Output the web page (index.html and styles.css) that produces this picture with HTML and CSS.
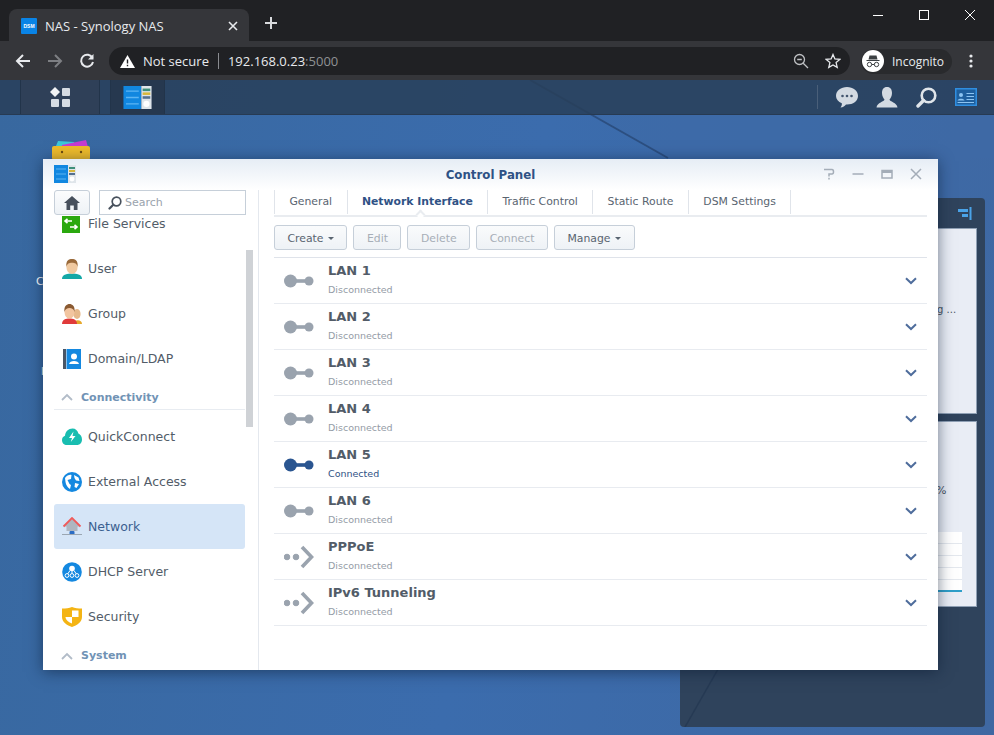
FILE: index.html
```html
<!DOCTYPE html>
<html lang="en">
<head>
    <meta charset="UTF-8">
    <title>NAS - Synology NAS</title>
    <link rel="stylesheet" href="styles.css">
</head>
<body>
    <svg class="defs" width="0" height="0">
        <symbol id="port" viewBox="0 0 30 14">
            <circle cx="6.5" cy="7" r="6.5"/>
            <rect x="11" y="5.2" width="10" height="3.6"/>
            <circle cx="25" cy="7" r="4.5"/>
        </symbol>
        <symbol id="tunnel" viewBox="0 0 30 24">
            <circle cx="3" cy="12" r="2.8"/>
            <circle cx="12" cy="12" r="2.8"/>
            <path d="M18 2 L27.5 12 L18 22" fill="none" stroke-width="3.6"/>
        </symbol>
        <symbol id="chevron" viewBox="0 0 12 8">
            <path d="M1 1.2 L6 6 L11 1.2" fill="none" stroke-width="2"/>
        </symbol>
        <symbol id="collapse" viewBox="0 0 12 8">
            <path d="M1 7 L6 2 L11 7" fill="none" stroke-width="1.8"/>
        </symbol>
        <symbol id="cp-icon" viewBox="0 0 22 18">
            <rect width="14" height="18" fill="#1187e0"/>
            <path d="M2 4h10M2 9h10M2 14h10" stroke="#5db5f2" stroke-width="1"/>
            <rect x="14" width="8" height="18" fill="#dfe5ea"/>
            <rect x="15" y="2" width="6" height="2" fill="#3e8f7a"/>
            <rect x="15" y="5" width="6" height="2" fill="#d7b73c"/>
            <rect x="15" y="8" width="6" height="2" fill="#55708f"/>
            <circle cx="18" cy="14" r="2.4" fill="#fff"/>
        </symbol>
    </svg>

    <div class="tabstrip">
        <div class="tab">
            <span class="favicon">DSM</span>
            <span class="tab-title">NAS - Synology NAS</span>
            <svg class="tab-close" width="10" height="10" viewBox="0 0 10 10"><path d="M1 1 L9 9 M9 1 L1 9"/></svg>
        </div>
        <svg class="new-tab" width="14" height="14" viewBox="0 0 14 14"><path d="M7 1 V13 M1 7 H13"/></svg>
        <div class="win-controls">
            <svg width="12" height="12" viewBox="0 0 12 12"><path d="M1 6.5 H11"/></svg>
            <svg width="12" height="12" viewBox="0 0 12 12"><rect x="1.5" y="1.5" width="9" height="9"/></svg>
            <svg width="12" height="12" viewBox="0 0 12 12"><path d="M1 1 L11 11 M11 1 L1 11"/></svg>
        </div>
    </div>

    <div class="toolbar">
        <svg class="nav-icon" width="16" height="16" viewBox="0 0 16 16"><path d="M15 8 H2 M8 2 L2 8 L8 14"/></svg>
        <svg class="nav-icon dim" width="16" height="16" viewBox="0 0 16 16"><path d="M1 8 H14 M8 2 L14 8 L8 14"/></svg>
        <svg class="nav-icon" width="16" height="16" viewBox="0 0 16 16"><path d="M13.5 5 A6 6 0 1 0 14 9"/><path class="solid" d="M14.5 1 V6.5 H9 Z"/></svg>
        <div class="omnibox">
            <svg class="warn" width="15" height="13" viewBox="0 0 15 13"><path d="M7.5 0 L15 13 H0 Z" fill="#fff"/><path d="M7.5 4.5 V8.5 M7.5 9.8 V11.2" stroke="#202124" stroke-width="1.4"/></svg>
            <span class="not-secure">Not secure</span>
            <span class="url">192.168.0.23<span class="port">:5000</span></span>
            <div class="omni-right">
                <svg class="omni-icon" width="16" height="16" viewBox="0 0 16 16"><circle cx="6.5" cy="6.5" r="5"/><path d="M10.2 10.2 L15 15 M4.2 6.5 H8.8"/></svg>
                <svg class="omni-icon star" width="16" height="16" viewBox="0 0 16 16"><path d="M8 1.5 L9.9 6 L14.8 6.4 L11.1 9.6 L12.2 14.4 L8 11.9 L3.8 14.4 L4.9 9.6 L1.2 6.4 L6.1 6 Z"/></svg>
            </div>
        </div>
        <div class="profile">
            <svg width="22" height="22" viewBox="0 0 22 22">
                <circle cx="11" cy="11" r="11" fill="#fff"/>
                <path d="M7.5 5.5 H14.5 L15.5 9.5 H6.5 Z M4.5 10 H17.5 V11 H4.5 Z" fill="#3c4043"/>
                <circle cx="7.5" cy="14.5" r="2.2" fill="none" stroke="#3c4043"/>
                <circle cx="14.5" cy="14.5" r="2.2" fill="none" stroke="#3c4043"/>
                <path d="M9.7 14.5 H12.3" stroke="#3c4043"/>
            </svg>
            <span>Incognito</span>
        </div>
        <svg class="kebab" width="4" height="14" viewBox="0 0 4 14"><circle cx="2" cy="2" r="1.6"/><circle cx="2" cy="7" r="1.6"/><circle cx="2" cy="12" r="1.6"/></svg>
    </div>

    <div class="desktop">
        <svg class="wallpaper" width="994" height="655" viewBox="0 0 994 655">
            <path d="M668 78 L994 78 L994 0 L530 0 Z" fill="#3d6aa6" opacity="0.5"/>
            <path d="M530 0 L668 78" stroke="#2c4f80" stroke-width="2" fill="none"/>
        </svg>

        <div class="taskbar">
            <div class="task-btn apps">
                <svg width="22" height="22" viewBox="0 0 22 22">
                    <path d="M6 1 L11 6 L6 11 L1 6 Z" fill="#f1f3f5"/>
                    <rect x="13" y="2" width="8" height="8" rx="1" fill="#d5dbe2"/>
                    <rect x="2" y="13" width="8" height="8" rx="1" fill="#d5dbe2"/>
                    <rect x="13" y="13" width="8" height="8" rx="1" fill="#d5dbe2"/>
                </svg>
            </div>
            <div class="task-btn open">
                <svg width="29" height="23"><use href="#cp-icon"/></svg>
            </div>
            <div class="tray">
                <svg width="22" height="21" viewBox="0 0 22 21"><path d="M11 0 C17 0 22 3.6 22 9 C22 14 17 17.5 11 17.5 L10 17.5 C9 19 7 20.5 4.5 20.5 C5.8 19 6 17.5 5.8 16.3 C2.3 14.8 0 12.2 0 9 C0 3.6 5 0 11 0 Z" fill="#d3dae2"/><circle cx="6.5" cy="9" r="1.3" fill="#43566f"/><circle cx="11" cy="9" r="1.3" fill="#43566f"/><circle cx="15.5" cy="9" r="1.3" fill="#43566f"/></svg>
                <svg width="22" height="21" viewBox="0 0 22 21"><path d="M11 0 C14.5 0 16 2.6 16 6 C16 9 14.5 11.5 13.5 12.5 C13.5 14.5 21 15.5 21.5 20.5 H0.5 C1 15.5 8.5 14.5 8.5 12.5 C7.5 11.5 6 9 6 6 C6 2.6 7.5 0 11 0 Z" fill="#d3dae2"/></svg>
                <svg width="21" height="21" viewBox="0 0 21 21"><circle cx="12.5" cy="8.5" r="6.8" fill="none" stroke="#e0e5ea" stroke-width="2.6"/><path d="M7.5 13.5 L2 19" stroke="#e0e5ea" stroke-width="3.4" stroke-linecap="round"/></svg>
                <svg width="22" height="18" viewBox="0 0 22 18"><rect width="22" height="18" fill="#2f8ee0"/><rect x="1.5" y="1.5" width="19" height="15" fill="#1e5f9e"/><circle cx="6" cy="7" r="2" fill="#8cc4f2"/><path d="M2.5 12.5 C3 10 9 10 9.5 12.5 Z" fill="#8cc4f2"/><path d="M11.5 5.5 H19 M11.5 8.5 H19 M11.5 11.5 H19 M2.5 14.5 H19" stroke="#8cc4f2" stroke-width="1.2"/></svg>
            </div>
        </div>

        <div class="desk-icon">
            <svg width="38" height="20" viewBox="0 0 38 20">
                <path d="M4 6 L6 1 L22 2 L24 6 Z" fill="#3cc7d8"/>
                <path d="M10 5 L34 0 L36 7 H10 Z" fill="#c43cd0"/>
                <rect y="6" width="38" height="14" rx="2" fill="#eebb2a"/>
                <circle cx="10" cy="12" r="1.2" fill="#6d4c10"/>
                <circle cx="29" cy="12" r="1.2" fill="#6d4c10"/>
            </svg>
        </div>
        <span class="desk-label first">C</span>
        <span class="desk-label second">l</span>

        <div class="widget">
            <svg class="widget-line" width="50" height="70" viewBox="0 0 50 70"><path d="M45 0 L5 70" stroke="#263a54" stroke-width="1.5" fill="none"/></svg>
            <div class="widget-head">
                <svg width="15" height="13" viewBox="0 0 15 13"><path d="M1 2 H11 V5 H1 Z M5 7 H11 V10 H5 Z" fill="#4aa3e8"/><rect x="12.5" width="2" height="13" fill="#4aa3e8"/></svg>
            </div>
            <div class="widget-card top"><span class="widget-text">g ...</span></div>
            <div class="widget-card bottom">
                <span class="widget-text pct">%</span>
                <div class="chart"></div>
            </div>
        </div>

        <div class="window">
            <div class="win-title">
                <svg class="win-icon" width="22" height="18"><use href="#cp-icon"/></svg>
                <span class="win-name">Control Panel</span>
                <div class="win-actions">
                    <svg width="12" height="12" viewBox="0 0 12 12"><path d="M1 1.5 H9 C11 1.5 11 6 9 6 H6 V8.5 M6 9.8 V11.5"/></svg>
                    <svg width="12" height="12" viewBox="0 0 12 12"><path d="M0.5 6 H11.5"/></svg>
                    <svg width="12" height="12" viewBox="0 0 12 12"><rect x="1" y="2.5" width="10" height="7.5"/><path class="thick" d="M1 3.5 H11"/></svg>
                    <svg width="12" height="12" viewBox="0 0 12 12"><path d="M1 1 L11 11 M11 1 L1 11"/></svg>
                </div>
            </div>

            <div class="win-body">
                <aside class="sidebar">
                    <div class="side-top">
                        <button class="home-btn">
                            <svg width="16" height="14" viewBox="0 0 16 14"><path d="M8 0 L16 7 H13.5 V14 H9.8 V9.5 H6.2 V14 H2.5 V7 H0 Z" fill="#47505c"/></svg>
                        </button>
                        <div class="search">
                            <svg width="14" height="14" viewBox="0 0 14 14"><circle cx="8.5" cy="5.5" r="4.3" fill="none" stroke="#47505c" stroke-width="1.7"/><path d="M5.3 8.7 L1.5 12.5" stroke="#47505c" stroke-width="2.2" stroke-linecap="round"/></svg>
                            <span>Search</span>
                        </div>
                    </div>
                    <div class="side-list">
                        <div class="side-item first-item">
                            <svg width="20" height="20" viewBox="0 0 20 20"><rect y="2" width="18" height="17" fill="#2aa80e"/><path d="M3 7 H10 M5.5 4.8 L3 7 L5.5 9.2 M8 13 H15 M12.5 10.8 L15 13 L12.5 15.2" fill="none" stroke="#fff" stroke-width="1.6"/></svg>
                            <span>File Services</span>
                        </div>
                        <div class="side-item">
                            <svg width="20" height="20" viewBox="0 0 20 20"><path d="M0 20 C0 15 6 14.5 10 14.5 C14 14.5 20 15 20 20 Z" fill="#14a8a6"/><ellipse cx="10" cy="8" rx="5.6" ry="7" fill="#f0c9a0"/><path d="M4.4 8 C3.6 1.5 7 0 10 0 C13 0 16.4 1.5 15.6 8 C14.8 4.6 13 3.8 10 3.8 C7 3.8 5.2 4.6 4.4 8 Z" fill="#9a6a3a"/></svg>
                            <span>User</span>
                        </div>
                        <div class="side-item">
                            <svg width="20" height="20" viewBox="0 0 20 20"><ellipse cx="15" cy="10" rx="3.6" ry="5" fill="#e6b98c"/><path d="M11 20 C12 15 20 15 20 20 Z" fill="#e6a82a"/><path d="M0 20 C0 15.5 4 14.5 7.5 14.5 C11 14.5 15 15.5 15 20 Z" fill="#e03a3a"/><ellipse cx="7.5" cy="8" rx="5" ry="6.6" fill="#f2c5a0"/><path d="M2.5 8 C1.6 2 5 0 7.5 0 C10 0 13.4 2 12.5 8 C11.8 5 10 4 7.5 4 C5 4 3.2 5 2.5 8 Z" fill="#8a5a32"/></svg>
                            <span>Group</span>
                        </div>
                        <div class="side-item">
                            <svg width="20" height="20" viewBox="0 0 20 20"><rect x="1" y="0" width="3" height="20" fill="#4a5666"/><rect x="4.5" y="0" width="14.5" height="20" fill="#1488e0"/><circle cx="12" cy="7.5" r="3" fill="#fff"/><path d="M7 15 C7.5 11 16.5 11 17 15 Z" fill="#fff"/></svg>
                            <span>Domain/LDAP</span>
                        </div>
                        <div class="side-group conn">
                            <svg width="12" height="8"><use href="#collapse"/></svg>
                            <span>Connectivity</span>
                        </div>
                        <div class="side-item">
                            <svg width="20" height="18" viewBox="0 0 20 18"><path d="M5 17 C2 17 0 15 0 12 C0 10 1.2 8.5 3 7.8 C3.4 3.5 6.5 0.5 10.5 0.5 C13.5 0.5 15.8 2.5 16.4 5.6 C18.6 6.4 20 8.8 20 11.5 C20 14.8 17.8 17 15 17 Z" fill="#18bdb0"/><path d="M11.5 3.5 L7 10 H10 L8.8 14 L13.5 8 H10.5 Z" fill="#fff"/></svg>
                            <span>QuickConnect</span>
                        </div>
                        <div class="side-item">
                            <svg width="20" height="20" viewBox="0 0 20 20"><circle cx="10" cy="10" r="10" fill="#1488e0"/><path d="M3 6 C5 3 8 2.5 9.5 3 L9 7 L5.5 8 L7.5 12 L9 13 L8 17 C5.5 15.5 4 13 3.5 10 Z M12 3 L16.5 5.5 L17.5 9 L14 8.5 L12.5 6 Z M13 11 L17 12 L14.5 16 L12.5 15 Z" fill="#fff"/></svg>
                            <span>External Access</span>
                        </div>
                        <div class="side-item active">
                            <svg width="20" height="20" viewBox="0 0 20 20"><path d="M10 2 L18 9.5 H15.5 V14 H4.5 V9.5 H2 Z" fill="#aeb6c0"/><path d="M1.5 9.5 L10 1 L18.5 9.5" fill="none" stroke="#ef5a5a" stroke-width="1.8"/><rect x="7.5" y="14" width="5" height="4" rx="1" fill="#2a6cc4"/><path d="M0 17.5 H20" stroke="#9aa6b2"/></svg>
                            <span>Network</span>
                        </div>
                        <div class="side-item">
                            <svg width="20" height="20" viewBox="0 0 20 20"><circle cx="10" cy="10" r="9.8" fill="#1488e0"/><circle cx="10" cy="6.5" r="2.8" fill="#fff"/><g fill="none" stroke="#fff"><circle cx="5" cy="13.5" r="1.9"/><circle cx="10" cy="13.5" r="1.9"/><circle cx="15" cy="13.5" r="1.9"/><path d="M10 9 V11.6 M8 8.5 L5.8 11.8 M12 8.5 L14.2 11.8"/></g></svg>
                            <span>DHCP Server</span>
                        </div>
                        <div class="side-item">
                            <svg width="20" height="20" viewBox="0 0 20 20"><path d="M0 1.5 C4 1.5 7 1 10 0 C13 1 16 1.5 20 1.5 V10 C20 15 15 18.5 10 20 C5 18.5 0 15 0 10 Z" fill="#f4b414"/><path d="M10 3.5 H16.5 V10 H10 Z M3.5 10 H10 V16.5 C7 15.5 3.5 13 3.5 10 Z" fill="#fff"/></svg>
                            <span>Security</span>
                        </div>
                        <div class="side-group sys">
                            <svg width="12" height="8"><use href="#collapse"/></svg>
                            <span>System</span>
                        </div>
                    </div>
                    <div class="scrollbar"></div>
                </aside>

                <main class="content">
                    <div class="tabs">
                        <div class="cp-tab">General</div>
                        <div class="cp-tab selected">Network Interface</div>
                        <div class="cp-tab">Traffic Control</div>
                        <div class="cp-tab">Static Route</div>
                        <div class="cp-tab">DSM Settings</div>
                    </div>
                    <div class="actions">
                        <button class="btn">Create <i class="caret"></i></button>
                        <button class="btn off">Edit</button>
                        <button class="btn off">Delete</button>
                        <button class="btn off">Connect</button>
                        <button class="btn">Manage <i class="caret"></i></button>
                    </div>
                    <div class="iface-list">
                        <div class="iface">
                            <svg class="iface-icon"><use href="#port"/></svg>
                            <div class="iface-text"><div class="iface-name">LAN 1</div><div class="iface-status">Disconnected</div></div>
                            <svg class="chev" width="12" height="8"><use href="#chevron"/></svg>
                        </div>
                        <div class="iface">
                            <svg class="iface-icon"><use href="#port"/></svg>
                            <div class="iface-text"><div class="iface-name">LAN 2</div><div class="iface-status">Disconnected</div></div>
                            <svg class="chev" width="12" height="8"><use href="#chevron"/></svg>
                        </div>
                        <div class="iface">
                            <svg class="iface-icon"><use href="#port"/></svg>
                            <div class="iface-text"><div class="iface-name">LAN 3</div><div class="iface-status">Disconnected</div></div>
                            <svg class="chev" width="12" height="8"><use href="#chevron"/></svg>
                        </div>
                        <div class="iface">
                            <svg class="iface-icon"><use href="#port"/></svg>
                            <div class="iface-text"><div class="iface-name">LAN 4</div><div class="iface-status">Disconnected</div></div>
                            <svg class="chev" width="12" height="8"><use href="#chevron"/></svg>
                        </div>
                        <div class="iface up">
                            <svg class="iface-icon"><use href="#port"/></svg>
                            <div class="iface-text"><div class="iface-name">LAN 5</div><div class="iface-status">Connected</div></div>
                            <svg class="chev" width="12" height="8"><use href="#chevron"/></svg>
                        </div>
                        <div class="iface">
                            <svg class="iface-icon"><use href="#port"/></svg>
                            <div class="iface-text"><div class="iface-name">LAN 6</div><div class="iface-status">Disconnected</div></div>
                            <svg class="chev" width="12" height="8"><use href="#chevron"/></svg>
                        </div>
                        <div class="iface">
                            <svg class="iface-icon tall"><use href="#tunnel"/></svg>
                            <div class="iface-text"><div class="iface-name">PPPoE</div><div class="iface-status">Disconnected</div></div>
                            <svg class="chev" width="12" height="8"><use href="#chevron"/></svg>
                        </div>
                        <div class="iface">
                            <svg class="iface-icon tall"><use href="#tunnel"/></svg>
                            <div class="iface-text"><div class="iface-name">IPv6 Tunneling</div><div class="iface-status">Disconnected</div></div>
                            <svg class="chev" width="12" height="8"><use href="#chevron"/></svg>
                        </div>
                    </div>
                </main>
            </div>
        </div>
    </div>
</body>
</html>
```

FILE: styles.css
```css
html, body {
    margin: 0;
    height: 735px;
    overflow: hidden;
}

body {
    font-family: "DejaVu Sans", Verdana, sans-serif;
    background: #3a6aa8;
    display: flex;
    flex-direction: column;
}

.defs {
    position: absolute;
}

/* browser chrome */
.tabstrip {
    height: 42px;
    background: #202124;
    display: flex;
    align-items: flex-end;
    position: relative;
    flex: none;
    box-shadow: inset 0 -1px 0 #35363a;
}

.tab {
    width: 240px;
    height: 33px;
    margin-left: 9px;
    background: #35363a;
    border-radius: 8px 8px 0 0;
    display: flex;
    align-items: center;
    padding: 0 11px 0 12px;
    box-sizing: border-box;
    color: #e8eaed;
    font: 13px "Open Sans", sans-serif;
}

.favicon {
    width: 16px;
    height: 16px;
    background: #0a84e6;
    color: #fff;
    font: bold 5px/16px "Liberation Sans", sans-serif;
    text-align: center;
    border-radius: 1px;
    flex: none;
}

.tab-title {
    margin-left: 8px;
    flex: 1;
}

.tab-close path {
    stroke: #e8eaed;
    stroke-width: 1.6;
    fill: none;
}

.new-tab {
    margin: 0 0 12px 15px;
}

.new-tab path {
    stroke: #d8dadd;
    stroke-width: 2;
}

.win-controls {
    position: absolute;
    top: 9px;
    right: 18px;
    display: flex;
    gap: 34px;
}

.win-controls svg * {
    stroke: #fff;
    stroke-width: 1;
    fill: none;
}

.toolbar {
    height: 38px;
    background: #35363a;
    display: flex;
    align-items: center;
    flex: none;
    padding-left: 15px;
}

.nav-icon {
    margin-right: 16px;
    flex: none;
}

.nav-icon path {
    stroke: #e8eaed;
    stroke-width: 2;
    fill: none;
}

.nav-icon path.solid {
    fill: #e8eaed;
    stroke: none;
}

.nav-icon.dim path {
    stroke: #7d7f83;
}

.omnibox {
    width: 741px;
    height: 28px;
    margin-left: -2px;
    background: #202124;
    border-radius: 14px;
    display: flex;
    align-items: center;
    padding-left: 11px;
    box-sizing: border-box;
    font: 13px "Open Sans", sans-serif;
    color: #e8eaed;
    flex: none;
}

.warn {
    flex: none;
}

.not-secure {
    margin-left: 8px;
    padding-right: 9px;
    border-right: 1px solid #8a8c90;
    line-height: 16px;
}

.url {
    margin-left: 9px;
}

.port {
    color: #8f9194;
}

.omni-right {
    margin-left: auto;
    display: flex;
    gap: 16px;
    padding-right: 9px;
}

.omni-icon * {
    stroke: #bfc1c4;
    stroke-width: 1.3;
    fill: none;
}

.omni-icon.star * {
    stroke: #e8eaed;
}

.profile {
    width: 90px;
    height: 25px;
    margin-left: 11px;
    border-radius: 13px;
    background: #292a2d;
    display: flex;
    align-items: center;
    gap: 8px;
    padding-left: 1px;
    color: #e8eaed;
    font: 12px "Open Sans", sans-serif;
    flex: none;
}

.kebab {
    margin-left: 17px;
    fill: #e8eaed;
}

/* DSM desktop */
.desktop {
    position: relative;
    flex: 1;
    background: linear-gradient(100deg, #38689f 0%, #3b6cad 50%, #3f68a2 100%);
}

.wallpaper {
    position: absolute;
    left: 0;
    top: 0;
}

.taskbar {
    position: relative;
    height: 35px;
    background: rgba(40, 62, 88, 0.85);
    border-bottom: 1px solid #273a52;
    box-sizing: border-box;
    display: flex;
}

.task-btn {
    display: flex;
    align-items: center;
    justify-content: center;
    border-left: 1px solid #22344a;
    border-right: 1px solid #22344a;
    background: #2f4058;
    box-sizing: border-box;
}

.task-btn.apps {
    width: 80px;
    margin-left: 20px;
}

.task-btn.open {
    width: 55px;
    margin-left: 10px;
    background: #26384f;
}

.tray {
    margin-left: auto;
    display: flex;
    align-items: center;
    gap: 18px;
    padding: 0 17px 0 18px;
    border-left: 1px solid #4a5f79;
    height: 24px;
    align-self: center;
}

.desk-icon {
    position: absolute;
    left: 52px;
    top: 60px;
}

.desk-label {
    position: absolute;
    color: #fff;
    font-size: 11px;
}

.desk-label.first {
    left: 36px;
    top: 195px;
}

.desk-label.second {
    left: 41px;
    top: 285px;
}

.widget {
    position: absolute;
    left: 680px;
    top: 118px;
    width: 305px;
    height: 529px;
    background: #2f435c;
    border-radius: 4px;
}

.widget-line {
    position: absolute;
    left: 0;
    bottom: 0;
}

.widget-head {
    height: 31px;
    display: flex;
    align-items: center;
    justify-content: flex-end;
    padding-right: 13px;
    box-sizing: border-box;
}

.widget-card {
    position: absolute;
    left: 0;
    width: 297px;
    background: #e9edf5;
    border: 1px solid #8fa0b5;
    box-sizing: border-box;
}

.widget-card.top {
    top: 30px;
    height: 186px;
}

.widget-card.bottom {
    top: 223px;
    height: 186px;
}

.widget-text {
    position: absolute;
    font-size: 10px;
    color: #4a5563;
    left: 256px;
    top: 75px;
}

.widget-text.pct {
    top: 62px;
    left: 255px;
    font-size: 11px;
}

.chart {
    position: absolute;
    right: 14px;
    top: 110px;
    width: 280px;
    height: 60px;
    box-sizing: border-box;
    border-bottom: 2px solid #2f9fc9;
    background: repeating-linear-gradient(#fff 0, #fff 11px, #e4e8ee 11px, #e4e8ee 12px);
}

/* control panel window */
.window {
    position: absolute;
    left: 43px;
    top: 79px;
    width: 895px;
    height: 511px;
    background: #fff;
    box-shadow: 0 2px 14px rgba(10, 25, 50, 0.55);
    display: flex;
    flex-direction: column;
}

.win-title {
    height: 31px;
    flex: none;
    background: linear-gradient(#e6edf5, #fff);
    position: relative;
    display: flex;
    align-items: center;
    justify-content: center;
}

.win-icon {
    position: absolute;
    left: 11px;
    top: 6px;
}

.win-name {
    font-size: 11.8px;
    font-weight: bold;
    color: #2f5285;
}

.win-actions {
    position: absolute;
    right: 16px;
    top: 9px;
    display: flex;
    gap: 17px;
}

.win-actions svg * {
    stroke: #a4adb8;
    stroke-width: 1.5;
    fill: none;
}

.win-actions svg .thick {
    stroke-width: 3;
}

.win-body {
    flex: 1;
    display: flex;
    min-height: 0;
}

.sidebar {
    width: 216px;
    flex: none;
    border-right: 1px solid #e4e8ee;
    box-sizing: border-box;
    position: relative;
    display: flex;
    flex-direction: column;
    padding-left: 11px;
}

.side-top {
    display: flex;
    gap: 9px;
    height: 26px;
    flex: none;
}

.home-btn {
    width: 36px;
    height: 25px;
    padding: 0;
    border: 1px solid #c6cfd9;
    border-radius: 3px;
    background: linear-gradient(#fbfcfd, #eef2f6);
    display: flex;
    align-items: center;
    justify-content: center;
}

.search {
    width: 147px;
    height: 25px;
    border: 1px solid #c6cfd9;
    box-sizing: border-box;
    display: flex;
    align-items: center;
    gap: 3px;
    padding-left: 8px;
    font-size: 11px;
    color: #9aa3ad;
}

.side-list {
    flex: 1;
    overflow: hidden;
    width: 191px;
}

.side-item {
    height: 45px;
    display: flex;
    align-items: center;
    padding-left: 8px;
    box-sizing: border-box;
    border-radius: 3px;
    font-size: 12.5px;
    color: #525c68;
    gap: 6px;
}

.side-item svg {
    flex: none;
}

.side-item.first-item {
    margin-top: -15px;
}

.side-item.active {
    background: #d5e5f7;
    color: #3b5f90;
}

.side-group {
    display: flex;
    align-items: center;
    gap: 8px;
    padding-left: 7px;
    font-size: 11px;
    font-weight: bold;
    color: #7193b5;
    box-sizing: border-box;
}

.side-group svg {
    stroke: #b2bcc8;
}

.side-group.conn {
    height: 29px;
    padding-top: 4px;
    margin-bottom: 4px;
    border-bottom: 1px solid #e8ecf1;
}

.side-group.sys {
    height: 33px;
}

.scrollbar {
    position: absolute;
    left: 203px;
    top: 60px;
    width: 7px;
    height: 177px;
    background: #cfd2d6;
}

.content {
    flex: 1;
    padding: 0 11px 0 15px;
    min-width: 0;
}

.tabs {
    display: flex;
    height: 27px;
    box-sizing: border-box;
    padding-bottom: 1px;
    border-bottom: 2px solid #e9ecf0;
    position: relative;
}

.cp-tab {
    height: 24px;
    line-height: 24px;
    padding: 0 14.4px;
    border-left: 1px solid #e0e4ea;
    font-size: 10.85px;
    color: #596470;
}

.cp-tab:last-child {
    border-right: 1px solid #e0e4ea;
}

.cp-tab.selected {
    color: #2f5285;
    font-weight: bold;
    position: relative;
}

.cp-tab.selected::after {
    content: "";
    position: absolute;
    left: 50%;
    bottom: -4px;
    width: 7px;
    height: 7px;
    background: #fff;
    border-left: 2px solid #e9ecf0;
    border-top: 2px solid #e9ecf0;
    transform: rotate(45deg);
    box-sizing: border-box;
}

.actions {
    display: flex;
    gap: 6px;
    margin-top: 8px;
    height: 25px;
}

.btn {
    height: 25px;
    padding: 1px 12.5px 0;
    border: 1px solid #c6cfd9;
    border-radius: 3px;
    background: linear-gradient(#fafbfc, #eef2f6);
    font: 10.85px "DejaVu Sans", sans-serif;
    color: #596470;
}

.btn.off {
    color: #a7aeb7;
}

.caret {
    display: inline-block;
    border: 3px solid transparent;
    border-top-color: #596470;
    border-bottom: 0;
    vertical-align: middle;
    margin-left: 1px;
}

.iface-list {
    margin-top: 7px;
    border-top: 1px solid #dfe3ea;
}

.iface {
    height: 46px;
    box-sizing: border-box;
    border-bottom: 1px solid #e8ebf0;
    display: flex;
    align-items: center;
    padding-left: 10px;
}

.iface-icon {
    width: 30px;
    height: 14px;
    fill: #9aa3ae;
    flex: none;
}

.iface-icon.tall {
    height: 24px;
    stroke: #9aa3ae;
    stroke-linecap: butt;
}

.iface.up .iface-icon {
    fill: #2a5590;
}

.iface-text {
    margin-left: 14px;
    flex: 1;
    margin-top: -2px;
}

.iface-name {
    font-size: 13px;
    line-height: 18px;
    font-weight: bold;
    color: #525c68;
}

.iface-status {
    font-size: 9.5px;
    line-height: 14px;
    margin-top: 3px;
    color: #949ca6;
}

.iface.up .iface-status {
    color: #2f5285;
}

.chev {
    stroke: #4f6d9c;
    margin-right: 10px;
    flex: none;
}
```
